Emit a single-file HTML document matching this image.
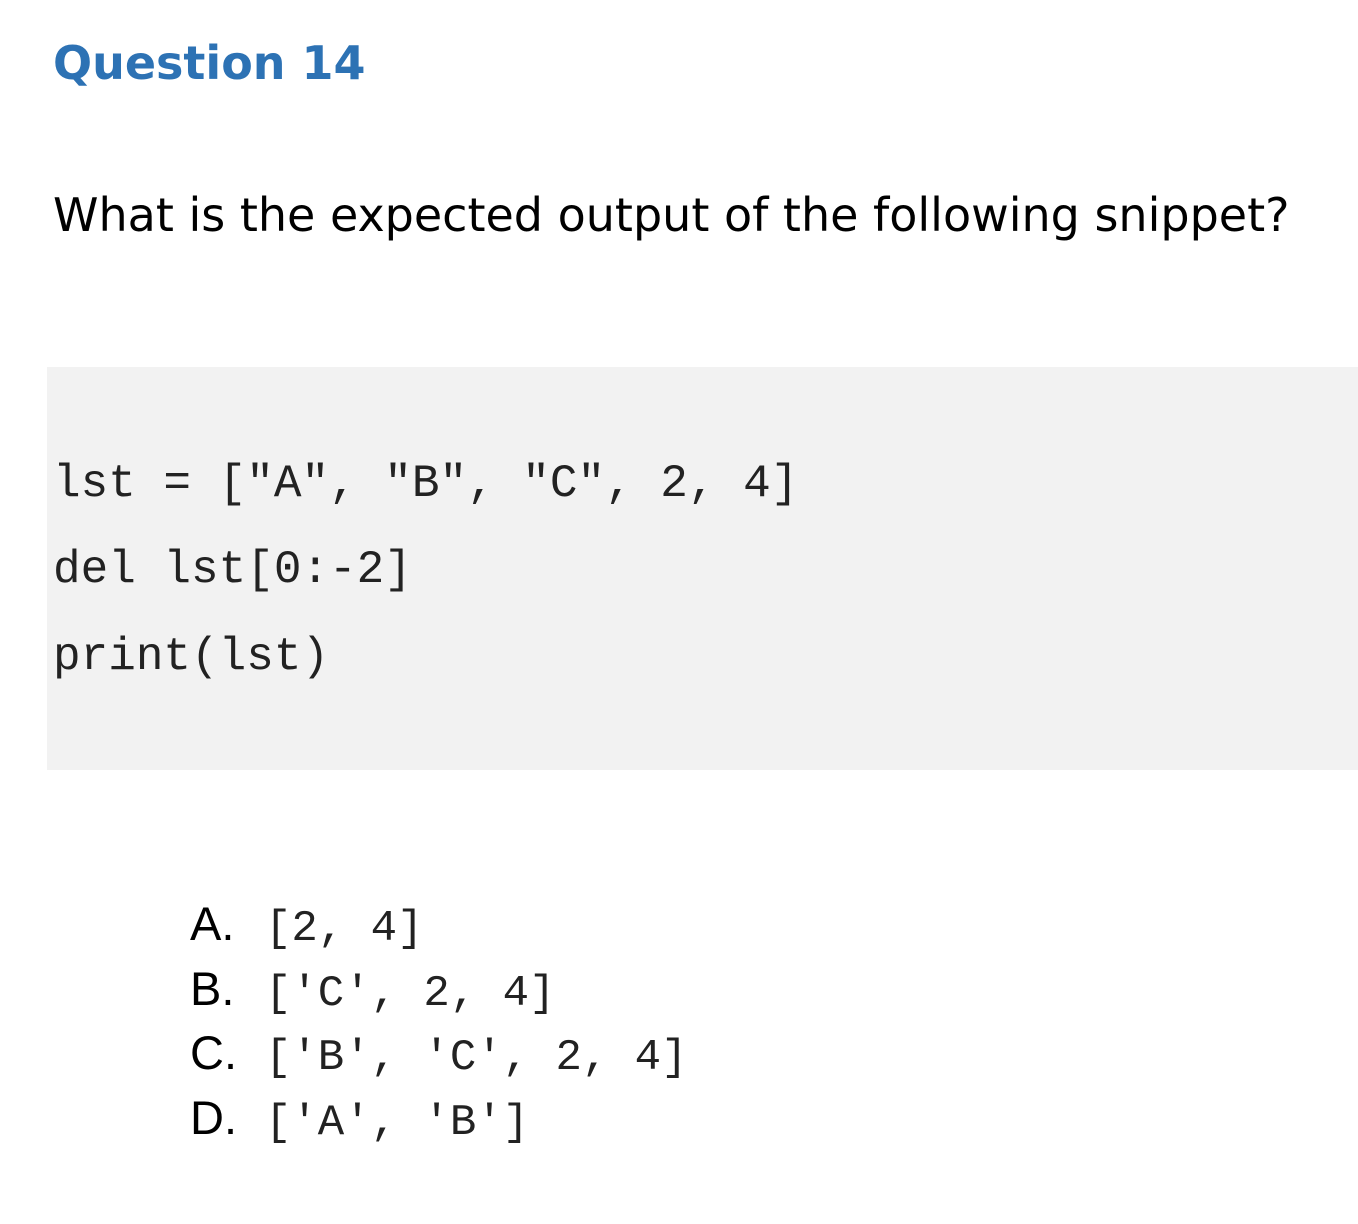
<!DOCTYPE html>
<html><head><meta charset="utf-8"><style>
html,body{margin:0;padding:0;background:#fff;width:1358px;height:1224px;overflow:hidden}
body{position:relative}
.h{position:absolute;left:53px;top:36px;font-family:"DejaVu Sans",Verdana,sans-serif;font-weight:bold;font-size:46px;color:#2d72b4;white-space:nowrap}
.q{position:absolute;left:53px;top:188px;font-family:"DejaVu Sans",Verdana,sans-serif;font-size:46px;color:#000;white-space:nowrap}
.code{position:absolute;left:47px;top:367px;width:1311px;height:403px;background:#f2f2f2}
.cl{position:absolute;left:53px;font-family:"Liberation Mono","Courier New",monospace;font-size:46px;color:#222;white-space:pre;line-height:1}
.opt{position:absolute;left:190px;white-space:pre;line-height:1}
.opt .l{font-family:"Liberation Sans",Arial,sans-serif;font-size:47px;color:#000;display:inline-block;width:75px}
.opt .c{font-family:"Liberation Mono","Courier New",monospace;font-size:44px;color:#222}
</style></head><body>
<div class="h">Question 14</div>
<div class="q">What is the expected output of the following snippet?</div>
<div class="code"></div>
<div class="cl" style="top:461px">lst = ["A", "B", "C", 2, 4]</div>
<div class="cl" style="top:547px">del lst[0:-2]</div>
<div class="cl" style="top:634px">print(lst)</div>
<div class="opt" style="top:900px"><span class="l">A.</span><span class="c">[2, 4]</span></div>
<div class="opt" style="top:965px"><span class="l">B.</span><span class="c">['C', 2, 4]</span></div>
<div class="opt" style="top:1029px"><span class="l">C.</span><span class="c">['B', 'C', 2, 4]</span></div>
<div class="opt" style="top:1094px"><span class="l">D.</span><span class="c">['A', 'B']</span></div>
</body></html>
